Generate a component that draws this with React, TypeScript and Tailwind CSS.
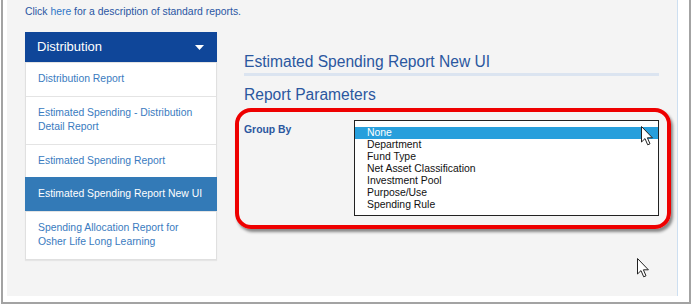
import React from 'react';

const items = [
  { label: 'Distribution Report' },
  { label: 'Estimated Spending - Distribution Detail Report' },
  { label: 'Estimated Spending Report' },
  { label: 'Estimated Spending Report New UI', active: true },
  { label: 'Spending Allocation Report for Osher Life Long Learning' },
];

const options = [
  'None',
  'Department',
  'Fund Type',
  'Net Asset Classification',
  'Investment Pool',
  'Purpose/Use',
  'Spending Rule',
];

// mouse pointer drawn from the screenshot
const Pointer = ({ className }: { className: string }) => (
  <svg className={className} width="13" height="20" viewBox="0 0 13 20">
    <path
      d="M0.5 0.5 L0.5 16 L4 12.6 L6.7 18.8 L9 17.8 L6.4 11.8 L11.4 11.8 Z"
      fill="#fff"
      stroke="#222"
      strokeWidth="1"
      strokeLinejoin="round"
    />
  </svg>
);

export default function App() {
  return (
    <div className="relative w-[692px] h-[305px] bg-white overflow-hidden font-['Liberation_Sans',Arial,sans-serif]">
      <div className="ml-[1px] mr-[1px] h-[304px] border-l-2 border-r-2 border-b-2 border-[#a3a3a3] pl-1 pr-[11px] pb-[6px] bg-white">
        <div className="h-full bg-[#f4f4f4] border-r border-[#cddff1] pl-[18px] pt-[5px]">
          <p className="text-[10.4px] leading-[14px] text-[#2a56a3]">
            Click <span className="text-[#2f76c7]">here</span> for a description of standard reports.
          </p>

          <div className="flex mt-[13px]">
            {/* sidebar */}
            <div className="w-[192px] self-start bg-white border border-[#e0e0e0] shadow-[0_1px_1px_rgba(0,0,0,0.06)]">
              <div className="h-[30px] bg-[#0f4699] flex items-center justify-between pl-3 pr-3 -mx-px -mt-px">
                <span className="text-[13px] text-white">Distribution</span>
                <svg width="9" height="5" viewBox="0 0 9 5" className="mr-[1px]">
                  <path d="M0 0 L9 0 L4.5 5 Z" fill="#fff" />
                </svg>
              </div>
              {items.map((it, i) => (
                <div
                  key={i}
                  className={
                    it.active
                      ? 'bg-[#337ab7] text-white pr-3 py-[9px] text-[10.4px] leading-[14.5px] border-t border-[#337ab7] -mx-px pl-[13px]'
                      : 'text-[#3a7bc0] px-3 py-[9px] text-[10.4px] leading-[14.5px] border-t border-[#e4e4e4] first:border-t-0 first:pt-[10px]'
                  }
                >
                  {it.label}
                </div>
              ))}
            </div>

            {/* main */}
            <div className="ml-[27px] pt-[20px] w-[415px]">
              <h2 className="text-[15.6px] leading-5 text-[#2b579f]">Estimated Spending Report New UI</h2>
              <div className="h-[3px] bg-[#dbe4f0] mt-[1px]" />
              <h3 className="text-[15.6px] leading-5 text-[#2b579f] mt-[9px]">Report Parameters</h3>
              <div className="flex mt-[15px]">
                <div className="w-[110px] text-[10.4px] leading-[14px] font-bold text-[#2b579f] pt-[3px]">Group By</div>
                <div className="w-[305px] h-[96px] border border-[#222] bg-white pt-[6px]">
                  {options.map((o, i) => (
                    <div
                      key={o}
                      className={
                        i === 0
                          ? 'bg-[#279fdc] text-white text-[10.4px] leading-[12px] pl-3'
                          : 'text-[#111] text-[10.4px] leading-[12px] pl-3'
                      }
                    >
                      {o}
                    </div>
                  ))}
                </div>
              </div>
            </div>
          </div>
        </div>
      </div>

      {/* red annotation */}
      <div className="absolute left-[235px] top-[108px] w-[436px] h-[121px] border-4 border-[#ee0000] rounded-[16px] shadow-[2px_3px_3px_rgba(0,0,0,0.45)]" />

      <Pointer className="absolute left-[641px] top-[126px]" />
      <Pointer className="absolute left-[637px] top-[258px]" />
    </div>
  );
}
